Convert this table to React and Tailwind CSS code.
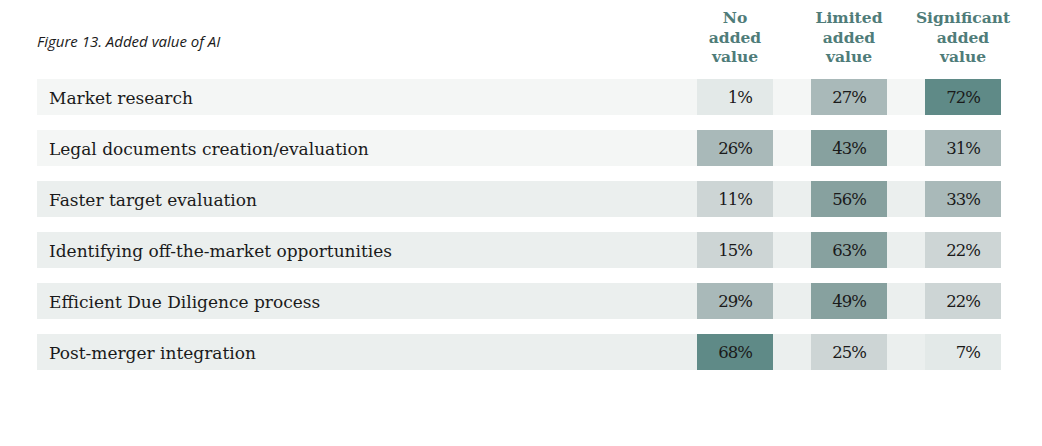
import React from "react";

const rows = [
  { label: "Market research", bg: "bg-[#f4f6f5]", vals: [1, 27, 72] },
  { label: "Legal documents creation/evaluation", bg: "bg-[#f4f6f5]", vals: [26, 43, 31] },
  { label: "Faster target evaluation", bg: "bg-[#ebefee]", vals: [11, 56, 33] },
  { label: "Identifying off-the-market opportunities", bg: "bg-[#ebefee]", vals: [15, 63, 22] },
  { label: "Efficient Due Diligence process", bg: "bg-[#ebefee]", vals: [29, 49, 22] },
  { label: "Post-merger integration", bg: "bg-[#ebefee]", vals: [68, 25, 7] },
];

function cellBg(v) {
  if (v >= 65) return "bg-[#5f8a87]";
  if (v >= 40) return "bg-[#87a19f]";
  if (v >= 26) return "bg-[#a9b9b9]";
  if (v >= 10) return "bg-[#cdd5d5]";
  return "bg-[#e3e9e8]";
}

const slab = "font-['DejaVu_Serif',serif]";

export default function App() {
  return (
    <div className="w-[1042px] h-[446px] bg-white pl-[37px] pr-[41px] pt-[7px]">
      <div className="grid grid-cols-[1fr_76px_76px_76px] gap-x-[38px]">
        <div className="pt-[23px] font-['Open_Sans',sans-serif] italic text-[15px] text-[#1a1a1a]">
          Figure 13. Added value of AI
        </div>
        {[
          ["No", "added", "value"],
          ["Limited", "added", "value"],
          ["Significant", "added", "value"],
        ].map((lines, i) => (
          <div
            key={i}
            className={`flex flex-col items-center pt-[1px] ${slab} font-bold text-[15.5px] leading-[19.5px] text-[#4f7c79] whitespace-nowrap`}
          >
            {lines.map((l) => (
              <span key={l}>{l}</span>
            ))}
          </div>
        ))}
      </div>
      <div className="mt-[12px] flex flex-col gap-[15px]">
        {rows.map((r) => (
          <div
            key={r.label}
            className={`grid grid-cols-[1fr_76px_76px_76px] gap-x-[38px] h-[36px] ${r.bg}`}
          >
            <div className={`flex items-center pt-[4px] pl-[12px] ${slab} text-[17px] text-[#1a1a1a]`}>
              {r.label}
            </div>
            {r.vals.map((v, i) => (
              <div
                key={i}
                className={`flex items-center justify-end pt-[4px] pr-[21px] ${cellBg(v)} ${slab} text-[16.5px] tracking-[-1px] text-[#1a1a1a]`}
              >
                {v}%
              </div>
            ))}
          </div>
        ))}
      </div>
    </div>
  );
}
